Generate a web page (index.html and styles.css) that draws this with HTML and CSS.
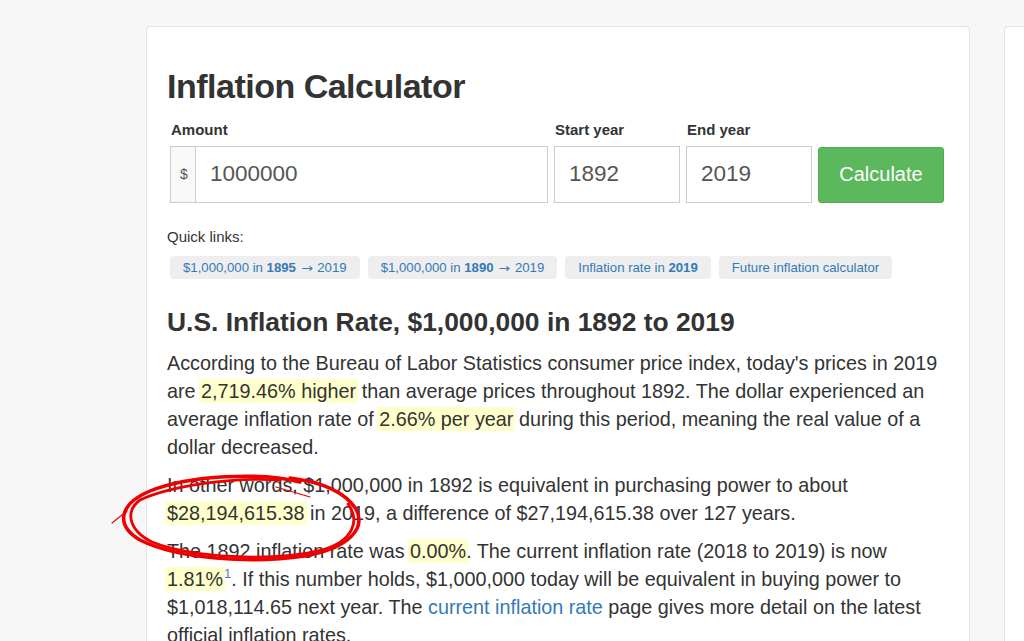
FILE: index.html
```html
<!DOCTYPE html>
<html lang="en">
<head>
<meta charset="utf-8">
<title>Inflation Calculator</title>
<link rel="stylesheet" href="styles.css">
</head>
<body>
<div class="layout">
  <main class="card">
    <h1 class="title">Inflation Calculator</h1>
    <form class="calc-form">
      <div class="field field-amount">
        <label class="field-label">Amount</label>
        <div class="input-group">
          <span class="addon">$</span>
          <input class="text-input" type="text" value="1000000">
        </div>
      </div>
      <div class="field">
        <label class="field-label">Start year</label>
        <input class="text-input" type="text" value="1892">
      </div>
      <div class="field">
        <label class="field-label">End year</label>
        <input class="text-input" type="text" value="2019">
      </div>
      <div class="field field-button">
        <button class="btn-calc" type="button">Calculate</button>
      </div>
    </form>

    <p class="quick-title">Quick links:</p>
    <div class="tags">
      <a class="tag">$1,000,000 in <b>1895</b> <span class="arrow">→</span> 2019</a>
      <a class="tag">$1,000,000 in <b>1890</b> <span class="arrow">→</span> 2019</a>
      <a class="tag">Inflation rate in <b>2019</b></a>
      <a class="tag">Future inflation calculator</a>
    </div>

    <h2 class="subtitle">U.S. Inflation Rate, $1,000,000 in 1892 to 2019</h2>
    <p class="para">According to the Bureau of Labor Statistics consumer price index, today's prices in 2019 are <span class="hl">2,719.46% higher</span> than average prices throughout 1892. The dollar experienced an average inflation rate of <span class="hl">2.66% per year</span> during this period, meaning the real value of a dollar decreased.</p>
    <p class="para">In other words, $1,000,000 in 1892 is equivalent in purchasing power to about <span class="hl">$28,194,615.38</span> in 2019, a difference of $27,194,615.38 over 127 years.</p>
    <p class="para">The 1892 inflation rate was <span class="hl">0.00%</span>. The current inflation rate (2018 to 2019) is now <span class="hl">1.81%</span><sup class="fn">1</sup>. If this number holds, $1,000,000 today will be equivalent in buying power to $1,018,114.65 next year. The <a class="link">current inflation rate</a> page gives more detail on the latest official inflation rates.</p>
  </main>
  <aside class="card side-card"></aside>
</div>

<svg class="scribble" width="1024" height="641" viewBox="0 0 1024 641" aria-hidden="true">
  <path class="loop" d="M 300 482 C 260 472, 190 475, 150 491 C 119 504, 115 525, 140 540 C 178 559, 250 564, 305 556 C 350 548, 366 528, 356 509 C 345 492, 322 482, 290 478"/>
  <path class="loop loop2" d="M 280 480 C 230 477, 170 486, 140 500 C 125 511, 128 530, 152 542 C 192 558, 272 562, 322 550 C 354 541, 360 520, 348 504"/>
  <path class="thin" d="M 112 523 L 127 511"/>
  <path class="thin" d="M 276 487 L 310 497"/>
</svg>
</body>
</html>
```

FILE: styles.css
```css
* { box-sizing: border-box; }

html, body {
  margin: 0;
  padding: 0;
}

body {
  background: #f7f7f7;
  font-family: "Liberation Sans", Arial, sans-serif;
  color: #333;
  overflow: hidden;
  height: 641px;
}

.layout {
  display: flex;
  align-items: flex-start;
  gap: 34px;
  padding: 26px 0 0 146px;
}

.card {
  background: #fff;
  border: 1px solid #e3e3e3;
  border-radius: 4px;
  width: 824px;
  min-height: 760px;
  padding: 40px 20px 0 20px;
  flex: none;
}

.side-card {
  width: 300px;
  padding: 0;
}

.title {
  font-size: 34px;
  line-height: 1.1;
  letter-spacing: -0.5px;
  font-weight: bold;
  margin: 1px 0 15px 0;
  color: #333;
}

.calc-form {
  display: flex;
  gap: 6px;
  margin: 0 0 24px 3px;
}

.field {
  display: flex;
  flex-direction: column;
  width: 126px;
}

.field-amount {
  width: 378px;
}

.field-button {
  justify-content: flex-end;
}

.field-label {
  font-size: 15px;
  font-weight: bold;
  line-height: 20px;
  margin-bottom: 5.5px;
  color: #333;
}

.field .field-label {
  padding-left: 1px;
}

.input-group {
  display: flex;
  height: 57px;
}

.addon {
  width: 25px;
  flex: none;
  border: 1px solid #ccc;
  border-right: 0;
  background: #f8f8f8;
  color: #555;
  font-size: 14px;
  display: flex;
  align-items: center;
  justify-content: center;
  padding-left: 2px;
}

.text-input {
  height: 57px;
  width: 100%;
  min-width: 0;
  border: 1px solid #ccc;
  border-radius: 0;
  padding: 0 13px 0 14px;
  font-family: "Liberation Sans", Arial, sans-serif;
  font-size: 22.5px;
  color: #555;
  background: #fff;
  outline: none;
}

.input-group .text-input {
  flex: 1;
}

.btn-calc {
  height: 56px;
  width: 126px;
  background: #5cb85c;
  border: 1px solid #4cae4c;
  border-radius: 3px;
  color: #fff;
  font-family: "Liberation Sans", Arial, sans-serif;
  font-size: 20px;
  padding: 0;
}

.quick-title {
  font-size: 15px;
  line-height: 20px;
  margin: 0 0 9.5px 0;
}

.tags {
  display: flex;
  gap: 8px;
  margin: 0 0 29px 3px;
}

.tag {
  display: block;
  height: 23px;
  line-height: 23px;
  padding: 0 13px;
  background: #eee;
  border-radius: 4px;
  font-size: 13.2px;
  color: #337ab7;
  text-decoration: none;
  white-space: nowrap;
}

.tag b {
  font-weight: bold;
}

.arrow {
  font-family: "DejaVu Sans", sans-serif;
  font-size: 12px;
  display: inline-block;
  width: 14px;
  text-align: center;
  transform: scaleX(1.15);
}

.subtitle {
  font-size: 26.4px;
  line-height: 1.1;
  font-weight: bold;
  margin: 0 0 11.5px 0;
  color: #333;
}

.para {
  font-size: 19.8px;
  line-height: 28px;
  margin: 0 0 10px 0;
}

.hl {
  background: #ffffcc;
  padding: 1px 2px;
  margin: 0 -2px;
}

.fn {
  font-size: 13px;
  color: #4a7fb5;
  vertical-align: 8px;
  line-height: 0;
  margin-left: 1px;
}

.link {
  color: #337ab7;
  text-decoration: none;
}

.scribble {
  position: absolute;
  left: 0;
  top: 0;
  pointer-events: none;
}

.loop {
  fill: none;
  stroke: #ee0000;
  stroke-width: 3.5;
  stroke-linecap: round;
}

.loop2 {
  stroke-width: 2.8;
}

.thin {
  fill: none;
  stroke: #ee0000;
  stroke-width: 1.2;
  stroke-linecap: round;
}
```
